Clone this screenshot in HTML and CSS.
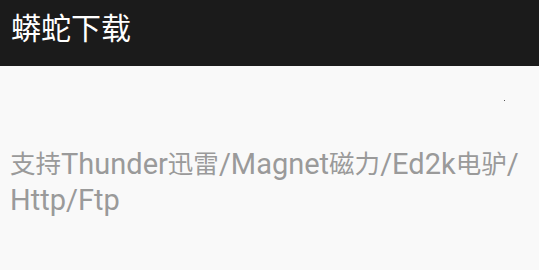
FILE: index.html
```html
<!DOCTYPE html>
<html lang="zh-CN">
<head>
    <meta charset="UTF-8">
    <title>蟒蛇下载</title>
    <link rel="stylesheet" href="styles.css">
</head>
<body>
    <div class="toolbar">蟒蛇下载</div>
    <div class="content">
        <span class="dot"></span>
        <p class="hint"><span class="cjk">支持</span><span class="latin">Thunder</span><span class="cjk">迅雷</span><span class="latin">/Magnet</span><span class="cjk">磁力</span><span class="latin">/Ed2k</span><span class="cjk">电驴</span><span class="latin">/</span> <span class="latin">Http/Ftp</span></p>
    </div>
</body>
</html>
```

FILE: styles.css
```css
body { margin: 0; background-color: #f9f9f9; font-family: Roboto, "Noto Sans CJK SC", sans-serif; }
.toolbar { height: 66px; background-color: #1b1b1b; color: #fff; font-size: 30px; line-height: 58px; padding-left: 11px; }
.content { position: relative; padding: 80px 10px 0 10px; }
.hint { margin: 0; font-size: 0; line-height: 36px; color: #9a9a9a; }
.hint span { display: inline-block; vertical-align: bottom; }
.cjk { font-size: 25.5px; }
.latin { font-size: 29px; }
.dot { position: absolute; left: 504px; top: 34px; width: 1px; height: 1px; background-color: #555; }
```
